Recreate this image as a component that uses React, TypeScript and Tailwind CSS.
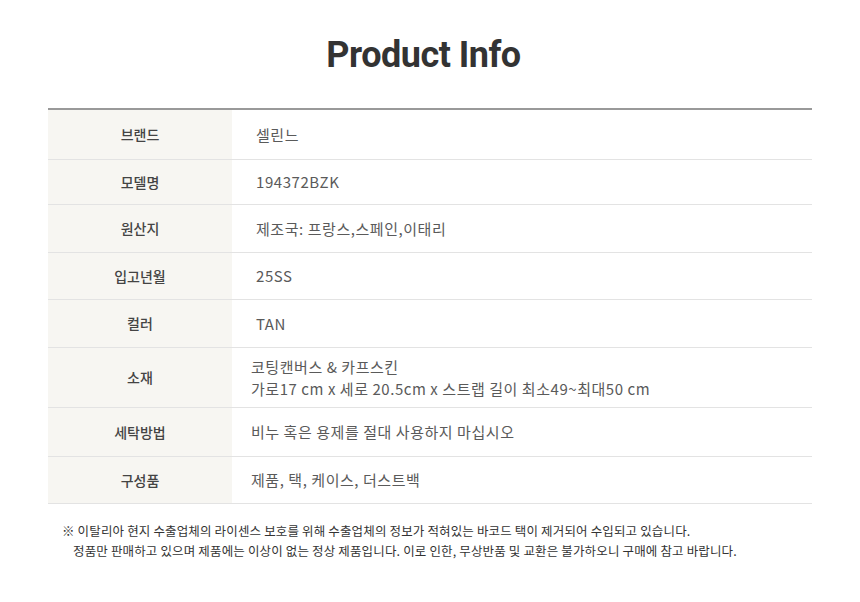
const rows = [
  { label: "브랜드", value: ["셀린느"], h: "h-[50px]", pad: "pl-6" },
  { label: "모델명", value: ["194372BZK"], h: "h-[45px]", pad: "pl-6" },
  { label: "원산지", value: ["제조국: 프랑스,스페인,이태리"], h: "h-[48px]", pad: "pl-6" },
  { label: "입고년월", value: ["25SS"], h: "h-[47px]", pad: "pl-6" },
  { label: "컬러", value: ["TAN"], h: "h-[48px]", pad: "pl-6" },
  {
    label: "소재",
    value: ["코팅캔버스 & 카프스킨", "가로17 cm x 세로 20.5cm x 스트랩 길이 최소49~최대50 cm"],
    h: "h-[60px]",
    pad: "pl-[19px]",
  },
  { label: "세탁방법", value: ["비누 혹은 용제를 절대 사용하지 마십시오"], h: "h-[49px]", pad: "pl-[19px]" },
  { label: "구성품", value: ["제품, 택, 케이스, 더스트백"], h: "h-[47px]", pad: "pl-[19px]" },
];

export default function App() {
  return (
    <div className="w-[860px] h-[602px] bg-white font-['Noto_Sans_CJK_KR',sans-serif]">
      <h1 className="pt-[33px] pr-[13px] h-[108px] text-center text-[36px] leading-[44px] font-bold tracking-[-0.5px] text-[#333] font-['Roboto','Noto_Sans_CJK_KR',sans-serif]">
        Product Info
      </h1>

      <div className="mx-[48px] border-t-2 border-[#999]">
        {rows.map((row) => (
          <div key={row.label} className={`flex border-b border-[#e3e3e3] ${row.h}`}>
            <div className="w-[184px] shrink-0 bg-[#f7f6f2] flex items-center justify-center text-[14px] font-medium text-[#444]">
              {row.label}
            </div>
            <div className={`flex-1 flex flex-col justify-center ${row.pad} text-[15px] leading-[22px] tracking-[0.55px] text-[#5a5a5a]`}>
              {row.value.map((v) => (
                <span key={v}>{v}</span>
              ))}
            </div>
          </div>
        ))}
      </div>

      <div className="pl-[62px] pt-[17px] text-[12.5px] leading-[20px] tracking-[0.15px] text-[#333]">
        <p>
          <span className="font-bold">※</span> 이탈리아 현지 수출업체의 라이센스 보호를 위해 수출업체의 정보가 적혀있는 바코드 택이 제거되어 수입되고 있습니다.
        </p>
        <p className="pl-[11px]">
          정품만 판매하고 있으며 제품에는 이상이 없는 정상 제품입니다. 이로 인한, 무상반품 및 교환은 불가하오니 구매에 참고 바랍니다.
        </p>
      </div>
    </div>
  );
}
